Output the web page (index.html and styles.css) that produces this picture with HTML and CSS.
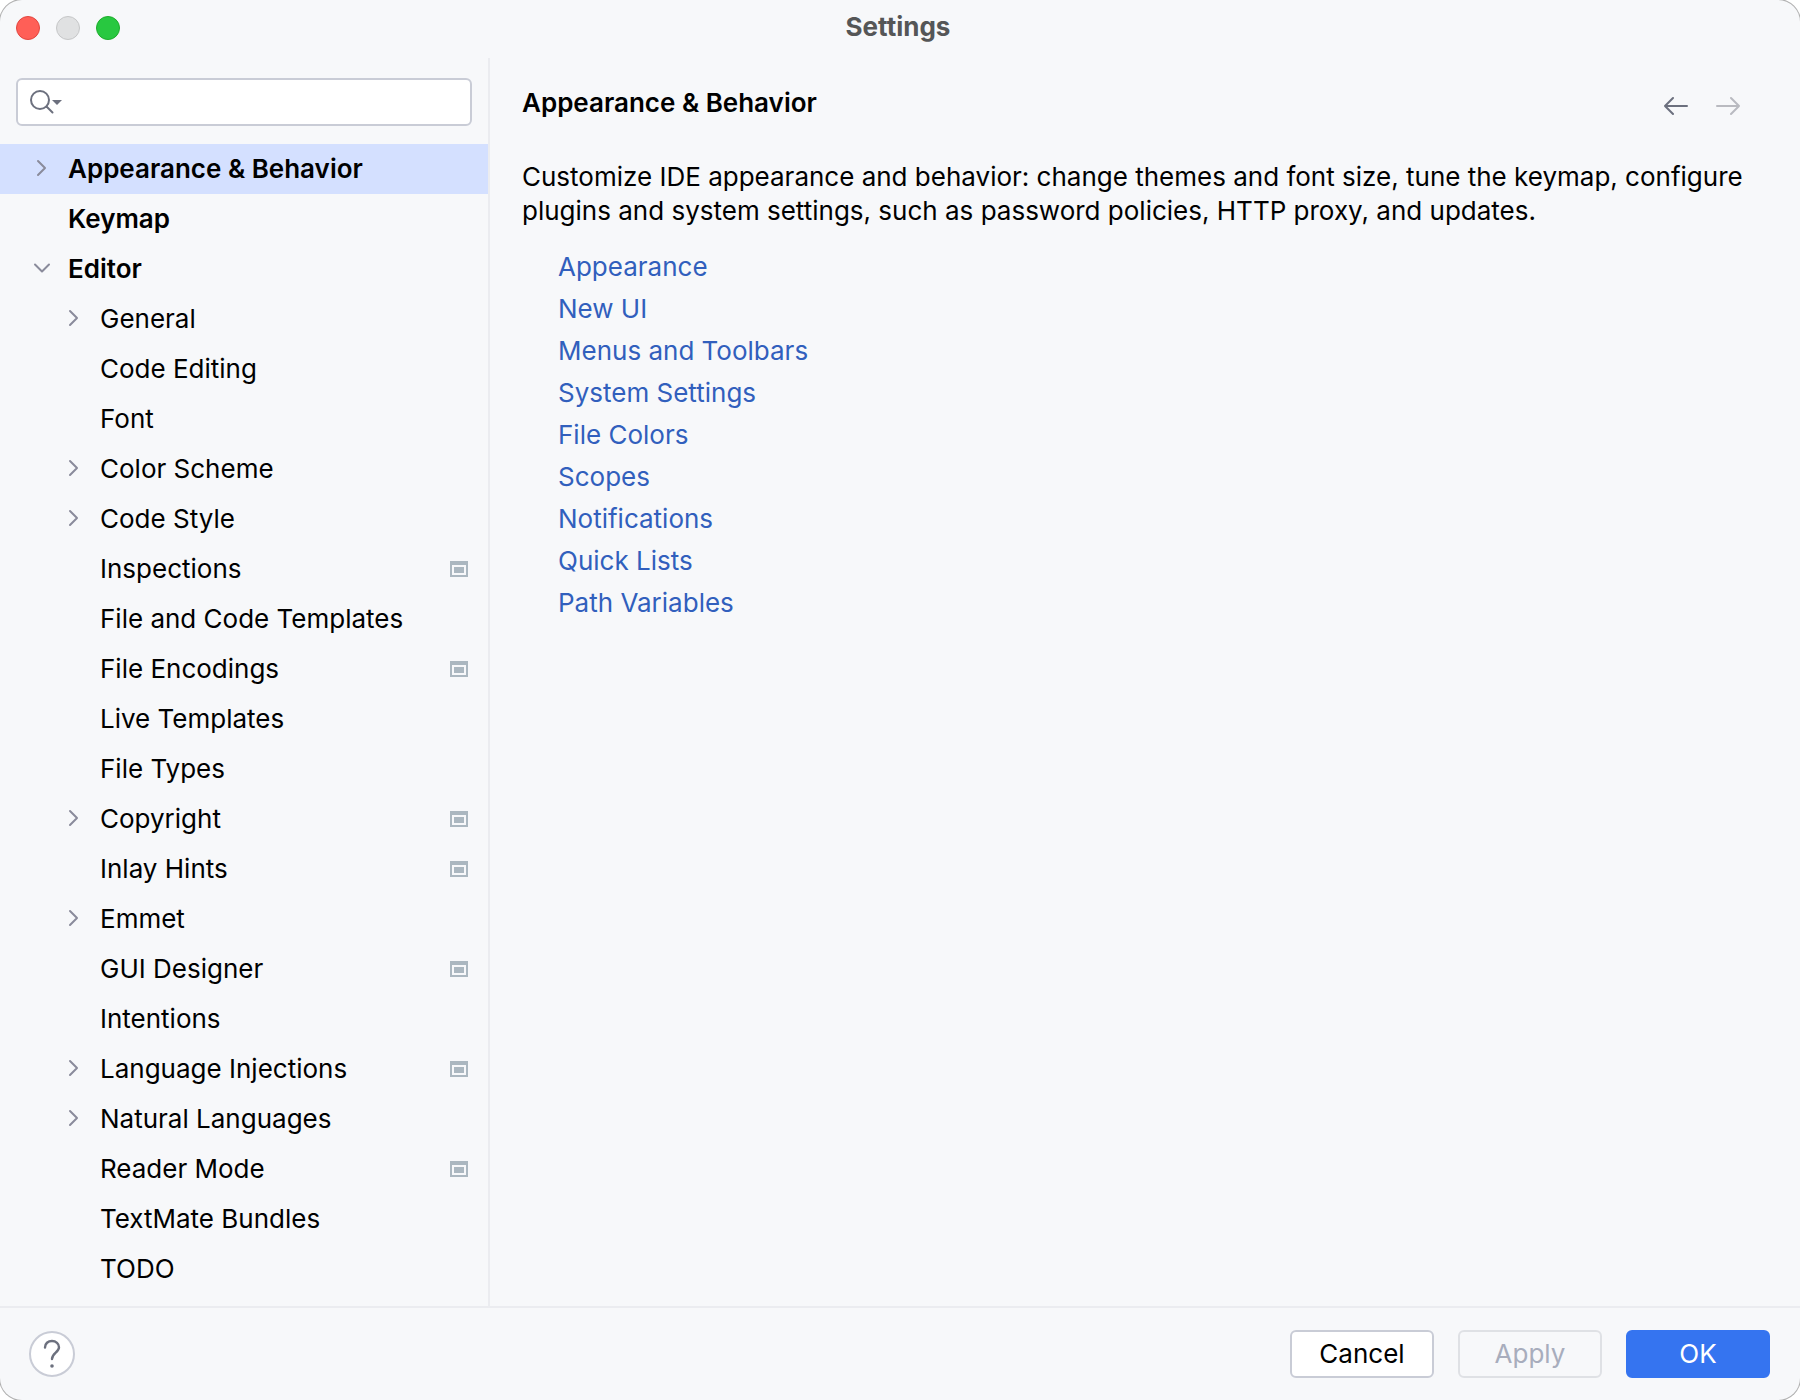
FILE: index.html
```html
<!DOCTYPE html>
<html lang="en">
<head>
<meta charset="utf-8">
<title>Settings</title>
<link rel="stylesheet" href="styles.css">
</head>
<body>
<svg class="sprite" aria-hidden="true">
  <symbol id="chevron-right" viewBox="0 0 20 20"><path d="M6 2l7 7-7 7" fill="none" stroke="#8a8b9b" stroke-width="2" stroke-linecap="round" stroke-linejoin="round"/></symbol>
  <symbol id="chevron-down" viewBox="0 0 20 20"><path d="M3 5.500l7 7 7-7" fill="none" stroke="#8a8b9b" stroke-width="2" stroke-linecap="round" stroke-linejoin="round"/></symbol>
  <symbol id="project" viewBox="0 0 18 16"><path fill="#abb7c0" fill-rule="evenodd" d="M0 0h18v16H0zM2 4v10h14V4zM4 6h10v6H4z"/></symbol>
</svg>
<div class="window">
  <header class="titlebar">
    <div class="lights">
      <button class="light close" aria-label="Close"></button>
      <button class="light minimize" aria-label="Minimize" disabled></button>
      <button class="light zoom" aria-label="Zoom"></button>
    </div>
    <h1 class="window-title">Settings</h1>
  </header>
  <div class="body">
    <aside class="sidebar">
      <label class="search">
        <svg class="search-icon" viewBox="0 0 34 26" aria-hidden="true">
          <circle cx="12" cy="11" r="9" fill="none" stroke="#6c707e" stroke-width="2"/>
          <path d="M18.500 17.500l6 6" stroke="#6c707e" stroke-width="2" stroke-linecap="round"/>
          <path d="M24 11h10l-5 5z" fill="#6c707e"/>
        </svg>
        <input class="search-input" type="text" aria-label="Search settings">
      </label>
      <nav class="tree" aria-label="Settings categories">
        <a class="row top selected" href="#"><svg class="arrow"><use href="#chevron-right"/></svg><span class="name">Appearance &amp; Behavior</span></a>
        <a class="row top" href="#"><span class="arrow"></span><span class="name">Keymap</span></a>
        <a class="row top" href="#"><svg class="arrow"><use href="#chevron-down"/></svg><span class="name">Editor</span></a>
        <a class="row" href="#"><svg class="arrow"><use href="#chevron-right"/></svg><span class="name">General</span></a>
        <a class="row" href="#"><span class="arrow"></span><span class="name">Code Editing</span></a>
        <a class="row" href="#"><span class="arrow"></span><span class="name">Font</span></a>
        <a class="row" href="#"><svg class="arrow"><use href="#chevron-right"/></svg><span class="name">Color Scheme</span></a>
        <a class="row" href="#"><svg class="arrow"><use href="#chevron-right"/></svg><span class="name">Code Style</span></a>
        <a class="row" href="#"><span class="arrow"></span><span class="name">Inspections</span><svg class="scope"><use href="#project"/></svg></a>
        <a class="row" href="#"><span class="arrow"></span><span class="name">File and Code Templates</span></a>
        <a class="row" href="#"><span class="arrow"></span><span class="name">File Encodings</span><svg class="scope"><use href="#project"/></svg></a>
        <a class="row" href="#"><span class="arrow"></span><span class="name">Live Templates</span></a>
        <a class="row" href="#"><span class="arrow"></span><span class="name">File Types</span></a>
        <a class="row" href="#"><svg class="arrow"><use href="#chevron-right"/></svg><span class="name">Copyright</span><svg class="scope"><use href="#project"/></svg></a>
        <a class="row" href="#"><span class="arrow"></span><span class="name">Inlay Hints</span><svg class="scope"><use href="#project"/></svg></a>
        <a class="row" href="#"><svg class="arrow"><use href="#chevron-right"/></svg><span class="name">Emmet</span></a>
        <a class="row" href="#"><span class="arrow"></span><span class="name">GUI Designer</span><svg class="scope"><use href="#project"/></svg></a>
        <a class="row" href="#"><span class="arrow"></span><span class="name">Intentions</span></a>
        <a class="row" href="#"><svg class="arrow"><use href="#chevron-right"/></svg><span class="name">Language Injections</span><svg class="scope"><use href="#project"/></svg></a>
        <a class="row" href="#"><svg class="arrow"><use href="#chevron-right"/></svg><span class="name">Natural Languages</span></a>
        <a class="row" href="#"><span class="arrow"></span><span class="name">Reader Mode</span><svg class="scope"><use href="#project"/></svg></a>
        <a class="row" href="#"><span class="arrow"></span><span class="name">TextMate Bundles</span></a>
        <a class="row" href="#"><span class="arrow"></span><span class="name">TODO</span></a>
      </nav>
    </aside>
    <main class="content">
      <div class="content-head">
        <h2 class="heading">Appearance &amp; Behavior</h2>
        <div class="history">
          <button class="history-button" aria-label="Back"><svg viewBox="0 0 24 20" aria-hidden="true"><path d="M23 10H1M9 2L1 10l8 8" fill="none" stroke="#6c707e" stroke-width="2" stroke-linecap="round" stroke-linejoin="round"/></svg></button>
          <button class="history-button" aria-label="Forward" disabled><svg viewBox="0 0 24 20" aria-hidden="true"><path d="M1 10h22M15 2l8 8-8 8" fill="none" stroke="#b9bac0" stroke-width="2" stroke-linecap="round" stroke-linejoin="round"/></svg></button>
        </div>
      </div>
      <p class="description">Customize IDE appearance and behavior: change themes and font size, tune the keymap, configure plugins and system settings, such as password policies, HTTP proxy, and updates.</p>
      <ul class="links">
        <li><a href="#">Appearance</a></li>
        <li><a href="#">New UI</a></li>
        <li><a href="#">Menus and Toolbars</a></li>
        <li><a href="#">System Settings</a></li>
        <li><a href="#">File Colors</a></li>
        <li><a href="#">Scopes</a></li>
        <li><a href="#">Notifications</a></li>
        <li><a href="#">Quick Lists</a></li>
        <li><a href="#">Path Variables</a></li>
      </ul>
    </main>
  </div>
  <footer class="footer">
    <button class="help" aria-label="Help"><svg viewBox="0 0 18 30" aria-hidden="true"><path d="M2 8.500C2 4.500 5 2 9 2s7 2.700 7 6.200c0 5-7 6-7 11.800" fill="none" stroke="#6c707e" stroke-width="2.400" stroke-linecap="round"/><circle cx="9" cy="27" r="1.800" fill="#6c707e"/></svg></button>
    <div class="actions">
      <button class="button">Cancel</button>
      <button class="button" disabled>Apply</button>
      <button class="button primary">OK</button>
    </div>
  </footer>
</div>
</body>
</html>
```
FILE: styles.css
```css
* {
  box-sizing: border-box;
}

body {
  margin: 0;
  background: #fff;
  color: #000;
  font: 26px/34px Inter, "Liberation Sans", sans-serif;
}

h1, h2, p, ul {
  margin: 0;
  padding: 0;
}

button, input {
  font: inherit;
}

a {
  color: inherit;
  text-decoration: none;
}

.sprite {
  display: none;
}

.window {
  display: flex;
  flex-direction: column;
  min-height: 100vh;
  background: #f7f8fa;
  border-radius: 22px;
  box-shadow: 0 0 0 1px #b0b0b0;
}

.titlebar {
  display: grid;
  grid-template-columns: 1fr auto 1fr;
  align-items: center;
  height: 58px;
  padding: 0 20px 4px 16px;
}

.lights {
  display: flex;
  gap: 16px;
  padding-top: 2px;
}

.light {
  width: 24px;
  height: 24px;
  padding: 0;
  border: 1px solid;
  border-radius: 50%;
}

.close {
  background: #ff5f57;
  border-color: #e2463f;
}

.minimize {
  background: #e0e1e2;
  border-color: #c6c7c8;
}

.zoom {
  background: #28c840;
  border-color: #1dad2b;
}

.window-title {
  font-size: 26px;
  font-weight: 700;
  color: #555657;
}

.body {
  display: flex;
  flex: 1;
}

.sidebar {
  flex: none;
  width: 490px;
  padding-top: 20px;
  padding-bottom: 12px;
  border-right: 2px solid #ebecf0;
}

.search {
  display: flex;
  align-items: center;
  height: 48px;
  margin: 0 16px 18px;
  padding: 0 10px;
  background: #fff;
  border: 2px solid #c9ccd6;
  border-radius: 6px;
}

.search-icon {
  flex: none;
  width: 34px;
  height: 26px;
}

.search-input {
  flex: 1;
  min-width: 0;
  border: 0;
  outline: 0;
  background: transparent;
}

.row {
  display: flex;
  align-items: center;
  gap: 16px;
  height: 50px;
  padding: 0 20px 0 64px;
}

.top {
  padding-left: 32px;
  font-weight: 600;
}

.selected {
  background: #d4e0ff;
}

.arrow {
  flex: none;
  width: 20px;
  height: 20px;
}

.name {
  flex: 1;
  white-space: nowrap;
}

.scope {
  flex: none;
  width: 18px;
  height: 16px;
}

.content {
  flex: 1;
  padding: 28px 50px 28px 32px;
}

.content-head {
  display: flex;
  justify-content: space-between;
  align-items: center;
  margin-bottom: 40px;
  padding-right: 10px;
}

.heading {
  font-size: 26px;
  font-weight: 600;
}

.history {
  display: flex;
  gap: 28px;
}

.history-button {
  display: flex;
  padding: 6px 0 0;
  border: 0;
  background: none;
}

.history-button svg {
  width: 24px;
  height: 20px;
}

.links {
  margin-top: 18px;
  padding-left: 36px;
  list-style: none;
  line-height: 42px;
  color: #315fbd;
}

.footer {
  display: flex;
  justify-content: space-between;
  align-items: center;
  padding: 22px 30px 22px 29px;
  border-top: 2px solid #ebecf0;
}

.help {
  display: flex;
  justify-content: center;
  align-items: center;
  width: 46px;
  height: 46px;
  padding: 0;
  background: #fff;
  border: 2px solid #c9ccd6;
  border-radius: 50%;
}

.help svg {
  width: 18px;
  height: 30px;
}

.actions {
  display: flex;
  gap: 24px;
}

.button {
  width: 144px;
  height: 48px;
  padding: 0;
  color: #000;
  background: #fff;
  border: 2px solid #c9ccd6;
  border-radius: 6px;
}

.button:disabled {
  color: #a8adbd;
  background: transparent;
  border-color: #dfe1e5;
}

.primary {
  color: #fff;
  background: #3574f0;
  border-color: #3574f0;
}
```
